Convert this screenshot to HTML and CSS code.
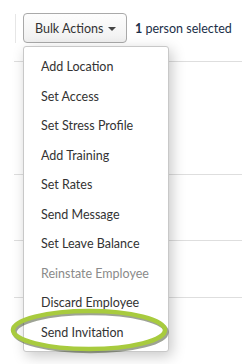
FILE: index.html
```html
<!DOCTYPE html>
<html lang="en">
<head>
    <meta charset="UTF-8">
    <meta name="viewport" content="width=device-width, initial-scale=1.0">
    <title>Bulk Actions</title>
    <link rel="stylesheet" href="styles.css">
</head>
<body>
    <div class="toolbar">
        <span class="divider"></span>
        <div class="bulk">
            <button class="bulk-btn">Bulk Actions <span class="caret"></span></button>
            <ul class="menu">
                <li>Add Location</li>
                <li>Set Access</li>
                <li>Set Stress Profile</li>
                <li>Add Training</li>
                <li>Set Rates</li>
                <li>Send Message</li>
                <li>Set Leave Balance</li>
                <li class="disabled">Reinstate Employee</li>
                <li>Discard Employee</li>
                <li>Send Invitation</li>
            </ul>
        </div>
        <span class="count"><b>1</b> person selected</span>
    </div>

    <div class="rows">
        <div class="row tall"></div>
        <div class="row mid"></div>
        <div class="row"></div>
        <div class="row"></div>
    </div>

    <svg class="highlight" width="164" height="50" viewBox="0 0 164 50">
        <ellipse cx="80" cy="25" rx="76" ry="19" fill="none" stroke="rgba(40,50,20,0.45)" stroke-width="4.5" transform="translate(1.5 2)"/>
        <ellipse cx="80" cy="25" rx="76" ry="19" fill="none" stroke="#a8cb3e" stroke-width="4.5"/>
    </svg>
</body>
</html>
```

FILE: styles.css
```css
body {
    margin: 0;
    background: #fff;
    font-family: Lato, "Open Sans", sans-serif;
    color: #333;
    position: relative;
    height: 364px;
    overflow: hidden;
}

.toolbar {
    display: flex;
    align-items: center;
    padding-top: 13px;
    height: 30px;
}

.divider {
    width: 1px;
    height: 29px;
    background: #e6e6e6;
    margin-left: 15px;
    margin-right: 7px;
}

.bulk {
    position: relative;
    height: 30px;
}

.bulk-btn {
    height: 30px;
    width: 104px;
    padding: 0 0 0 11px;
    text-align: left;
    border: 1px solid #a9a9a9;
    border-radius: 4px;
    background: linear-gradient(#fdfdfd, #f0f0f0);
    font-family: Lato, sans-serif;
    font-size: 12.5px;
    color: #333;
}

.caret {
    display: inline-block;
    width: 0;
    height: 0;
    margin-left: 1px;
    vertical-align: 2px;
    border-left: 4px solid transparent;
    border-right: 4px solid transparent;
    border-top: 4px solid #444;
}

.count {
    margin-left: 8px;
    font-size: 12.5px;
    color: #1b2f48;
}

.count b {
    font-weight: 700;
}

.menu {
    position: absolute;
    top: 33px;
    left: 0;
    width: 144px;
    margin: 0;
    padding: 5px 0 4px;
    list-style: none;
    background: #fff;
    border: 1px solid #c8c8c8;
    border-radius: 3px;
    box-shadow: 3px 4px 14px rgba(0, 0, 0, 0.22);
    z-index: 2;
}

.menu li {
    height: 29.5px;
    line-height: 29.5px;
    padding-left: 17px;
    font-size: 12.5px;
    color: #333;
    white-space: nowrap;
}

.menu li.disabled {
    color: #8a8a8a;
}

.rows {
    margin: 18px 0 0 14px;
}

.row {
    border-top: 1px solid #dedede;
    height: 56px;
}

.row.tall {
    height: 112px;
}

.row.mid {
    height: 65px;
}

.highlight {
    position: absolute;
    left: 9px;
    top: 305px;
    z-index: 3;
}
```
